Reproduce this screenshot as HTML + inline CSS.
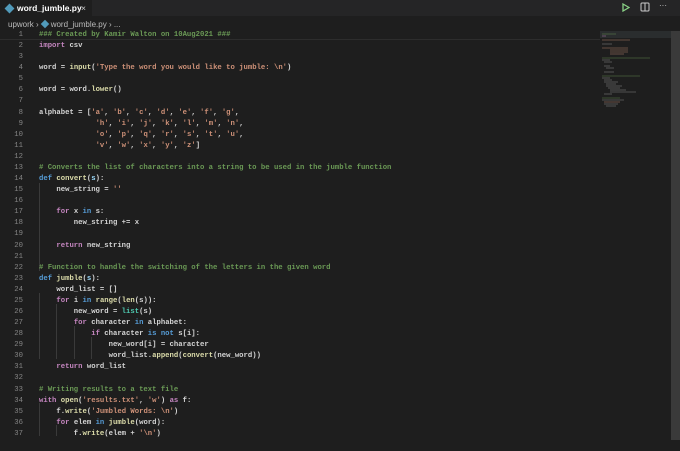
<!DOCTYPE html>
<html><head><meta charset="utf-8"><style>
*{margin:0;padding:0;box-sizing:border-box}
body{width:680px;height:440px;background:#1e1e1e;overflow:hidden;font-family:"Liberation Sans",sans-serif;position:relative}
.tabbar{position:absolute;left:0;top:0;width:680px;height:16px;background:#252526}
.tab{position:absolute;left:0;top:0;width:92px;height:16px;background:#1e1e1e;color:#fff;font-size:8.5px;font-weight:bold;line-height:16px;padding-left:17px}
.tab .ic{position:absolute;left:6px;top:4.5px;width:7px;height:7px;background:#519aba;transform:rotate(45deg)}
.tab .x{position:absolute;left:81px;top:0;color:#ccc;font-weight:normal}
.crumb{position:absolute;left:8px;top:20px;font-size:8px;color:#bbb}
.crumb .ic{display:inline-block;width:6px;height:6px;background:#519aba;transform:rotate(45deg);margin:0 3px 0 3px}
.code{position:absolute;left:0;top:30px;width:600px;font-family:"Liberation Mono",monospace;font-size:7.25px;line-height:11.08px;color:#d4d4d4;white-space:pre;font-weight:bold}
.ln{position:absolute;left:0;width:23px;text-align:right;color:#858585;font-weight:normal}
.l{position:absolute;left:39px}
.k{color:#c586c0}.s{color:#ce9178}.c{color:#6a9955}.f{color:#dcdcaa}.b{color:#569cd6}.p{color:#9cdcfe}.t{color:#4ec9b0}
.mini{position:absolute;left:600px;top:33px;width:72px;height:407px;opacity:.55}
.sb{position:absolute;left:671px;top:31px;width:9px;height:409px;background:#3a3a3a}
.guide{position:absolute;width:1px;background:#3a3a3a}
</style></head><body>
<div class="tabbar"><div class="tab"><span class="ic"></span>word_jumble.py<span class="x">×</span></div>
<svg style="position:absolute;left:622px;top:3px" width="8" height="9"><path d="M1 1 L7 4.5 L1 8 Z" fill="none" stroke="#89d185" stroke-width="1.3"/></svg>
<svg style="position:absolute;left:640px;top:2px" width="10" height="10"><rect x="1" y="1" width="8" height="8" rx="1" fill="none" stroke="#ccc"/><line x1="5" y1="1" x2="5" y2="9" stroke="#ccc"/></svg>
<div style="position:absolute;left:659px;top:1px;color:#ccc;font-size:8px">···</div>
</div>
<div class="crumb">upwork ›<span class="ic"></span>word_jumble.py › ...</div>
<div style="position:absolute;left:0;top:39px;width:600px;height:1px;background:#2d2d2d"></div>
<div style="position:absolute;left:600px;top:31px;width:71px;height:7px;background:#2a2d2e"></div>
<div class="guide" style="left:39px;top:183px;height:88px"></div>
<div class="guide" style="left:39px;top:293px;height:66px"></div>
<div class="guide" style="left:56px;top:304px;height:55px"></div>
<div class="guide" style="left:74px;top:326px;height:33px"></div>
<div class="guide" style="left:91px;top:337px;height:22px"></div>
<div class="guide" style="left:39px;top:403px;height:33px"></div>
<div class="guide" style="left:56px;top:425px;height:11px"></div>
<div class="code">
<div class="ln" style="top:0">1</div><div class="l" style="top:0"><span class="c">### Created by Kamir Walton on 10Aug2021 ###</span></div>
<div class="ln" style="top:11.08px">2</div><div class="l" style="top:11.08px"><span class="k">import</span> csv</div>
<div class="ln" style="top:22.16px">3</div>
<div class="ln" style="top:33.24px">4</div><div class="l" style="top:33.24px">word = <span class="f">input</span>(<span class="s">'Type the word you would like to jumble: \n'</span>)</div>
<div class="ln" style="top:44.32px">5</div>
<div class="ln" style="top:55.4px">6</div><div class="l" style="top:55.4px">word = word.<span class="f">lower</span>()</div>
<div class="ln" style="top:66.48px">7</div>
<div class="ln" style="top:77.56px">8</div><div class="l" style="top:77.56px">alphabet = [<span class="s">'a'</span>, <span class="s">'b'</span>, <span class="s">'c'</span>, <span class="s">'d'</span>, <span class="s">'e'</span>, <span class="s">'f'</span>, <span class="s">'g'</span>,</div>
<div class="ln" style="top:88.64px">9</div><div class="l" style="top:88.64px">             <span class="s">'h'</span>, <span class="s">'i'</span>, <span class="s">'j'</span>, <span class="s">'k'</span>, <span class="s">'l'</span>, <span class="s">'m'</span>, <span class="s">'n'</span>,</div>
<div class="ln" style="top:99.72px">10</div><div class="l" style="top:99.72px">             <span class="s">'o'</span>, <span class="s">'p'</span>, <span class="s">'q'</span>, <span class="s">'r'</span>, <span class="s">'s'</span>, <span class="s">'t'</span>, <span class="s">'u'</span>,</div>
<div class="ln" style="top:110.8px">11</div><div class="l" style="top:110.8px">             <span class="s">'v'</span>, <span class="s">'w'</span>, <span class="s">'x'</span>, <span class="s">'y'</span>, <span class="s">'z'</span>]</div>
<div class="ln" style="top:121.88px">12</div>
<div class="ln" style="top:132.96px">13</div><div class="l" style="top:132.96px"><span class="c"># Converts the list of characters into a string to be used in the jumble function</span></div>
<div class="ln" style="top:144.04px">14</div><div class="l" style="top:144.04px"><span class="b">def</span> <span class="f">convert</span>(<span class="p">s</span>):</div>
<div class="ln" style="top:155.12px">15</div><div class="l" style="top:155.12px">    new_string = <span class="s">''</span></div>
<div class="ln" style="top:166.2px">16</div>
<div class="ln" style="top:177.28px">17</div><div class="l" style="top:177.28px">    <span class="k">for</span> x <span class="b">in</span> s:</div>
<div class="ln" style="top:188.36px">18</div><div class="l" style="top:188.36px">        new_string += x</div>
<div class="ln" style="top:199.44px">19</div>
<div class="ln" style="top:210.52px">20</div><div class="l" style="top:210.52px">    <span class="k">return</span> new_string</div>
<div class="ln" style="top:221.6px">21</div>
<div class="ln" style="top:232.68px">22</div><div class="l" style="top:232.68px"><span class="c"># Function to handle the switching of the letters in the given word</span></div>
<div class="ln" style="top:243.76px">23</div><div class="l" style="top:243.76px"><span class="b">def</span> <span class="f">jumble</span>(<span class="p">s</span>):</div>
<div class="ln" style="top:254.84px">24</div><div class="l" style="top:254.84px">    word_list = []</div>
<div class="ln" style="top:265.92px">25</div><div class="l" style="top:265.92px">    <span class="k">for</span> i <span class="b">in</span> <span class="f">range</span>(<span class="f">len</span>(s)):</div>
<div class="ln" style="top:277px">26</div><div class="l" style="top:277px">        new_word = <span class="t">list</span>(s)</div>
<div class="ln" style="top:288.08px">27</div><div class="l" style="top:288.08px">        <span class="k">for</span> character <span class="b">in</span> alphabet:</div>
<div class="ln" style="top:299.16px">28</div><div class="l" style="top:299.16px">            <span class="k">if</span> character <span class="b">is not</span> s[i]:</div>
<div class="ln" style="top:310.24px">29</div><div class="l" style="top:310.24px">                new_word[i] = character</div>
<div class="ln" style="top:321.32px">30</div><div class="l" style="top:321.32px">                word_list.<span class="f">append</span>(<span class="f">convert</span>(new_word))</div>
<div class="ln" style="top:332.4px">31</div><div class="l" style="top:332.4px">    <span class="k">return</span> word_list</div>
<div class="ln" style="top:343.48px">32</div>
<div class="ln" style="top:354.56px">33</div><div class="l" style="top:354.56px"><span class="c"># Writing results to a text file</span></div>
<div class="ln" style="top:365.64px">34</div><div class="l" style="top:365.64px"><span class="k">with</span> <span class="f">open</span>(<span class="s">'results.txt'</span>, <span class="s">'w'</span>) <span class="k">as</span> f:</div>
<div class="ln" style="top:376.72px">35</div><div class="l" style="top:376.72px">    f.<span class="f">write</span>(<span class="s">'Jumbled Words: \n'</span>)</div>
<div class="ln" style="top:387.8px">36</div><div class="l" style="top:387.8px">    <span class="k">for</span> elem <span class="b">in</span> <span class="f">jumble</span>(word):</div>
<div class="ln" style="top:398.88px">37</div><div class="l" style="top:398.88px">        f.<span class="f">write</span>(elem + <span class="s">'\n'</span>)</div>
</div>
<svg class="mini" viewBox="0 0 72 407">
<g stroke-width="0.8">
<line x1="2" y1="1" x2="16" y2="1" stroke="#6a9955"/>
<line x1="2" y1="3" x2="6" y2="3" stroke="#c586c0"/>
<line x1="2" y1="7" x2="30" y2="7" stroke="#ce9178"/>
<line x1="2" y1="11" x2="12" y2="11" stroke="#999"/>
<line x1="2" y1="15" x2="28" y2="15" stroke="#ce9178"/>
<line x1="10" y1="17" x2="28" y2="17" stroke="#ce9178"/>
<line x1="10" y1="19" x2="28" y2="19" stroke="#ce9178"/>
<line x1="10" y1="21" x2="24" y2="21" stroke="#ce9178"/>
<line x1="2" y1="25" x2="50" y2="25" stroke="#6a9955"/>
<line x1="2" y1="27" x2="10" y2="27" stroke="#999"/>
<line x1="4" y1="29" x2="12" y2="29" stroke="#999"/>
<line x1="4" y1="33" x2="10" y2="33" stroke="#999"/>
<line x1="6" y1="35" x2="14" y2="35" stroke="#999"/>
<line x1="4" y1="39" x2="14" y2="39" stroke="#999"/>
<line x1="2" y1="43" x2="40" y2="43" stroke="#6a9955"/>
<line x1="2" y1="45" x2="10" y2="45" stroke="#999"/>
<line x1="4" y1="47" x2="12" y2="47" stroke="#999"/>
<line x1="4" y1="49" x2="18" y2="49" stroke="#999"/>
<line x1="6" y1="51" x2="16" y2="51" stroke="#999"/>
<line x1="6" y1="53" x2="22" y2="53" stroke="#999"/>
<line x1="8" y1="55" x2="20" y2="55" stroke="#999"/>
<line x1="10" y1="57" x2="26" y2="57" stroke="#999"/>
<line x1="10" y1="59" x2="36" y2="59" stroke="#999"/>
<line x1="4" y1="61" x2="12" y2="61" stroke="#999"/>
<line x1="2" y1="65" x2="20" y2="65" stroke="#6a9955"/>
<line x1="2" y1="67" x2="24" y2="67" stroke="#999"/>
<line x1="4" y1="69" x2="20" y2="69" stroke="#ce9178"/>
<line x1="4" y1="71" x2="18" y2="71" stroke="#999"/>
<line x1="6" y1="73" x2="16" y2="73" stroke="#999"/>
</g></svg>
<div class="sb"></div>
</body></html>
